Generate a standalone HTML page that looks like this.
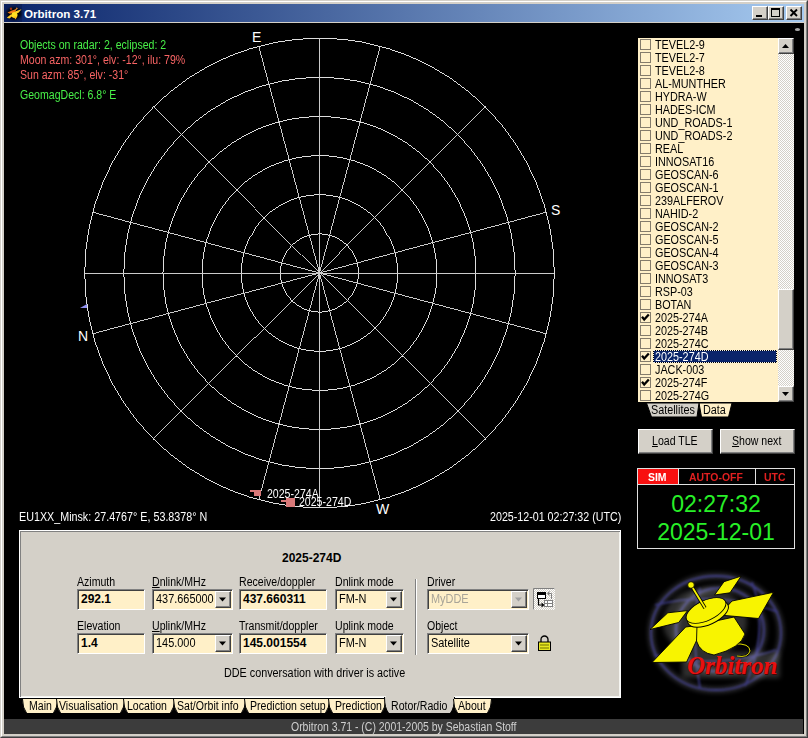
<!DOCTYPE html><html><head><meta charset="utf-8"><style>
*{margin:0;padding:0;box-sizing:border-box}
html,body{width:808px;height:738px;overflow:hidden;background:#d4d0c8;font-family:"Liberation Sans",sans-serif}
div,svg{position:absolute}
.u{font-size:12px;line-height:14px;white-space:nowrap;transform-origin:0 0;color:#000}
.b{font-size:12px;line-height:14px;font-weight:bold;white-space:nowrap;transform-origin:0 0;color:#000}
.btn{background:#d4d0c8;border:1px solid;border-color:#fff #404040 #404040 #fff;box-shadow:inset -1px -1px 0 #808080}
.edit{background:#fff0c8;border:1px solid;border-color:#808080 #fff #fff #808080;box-shadow:inset 1px 1px 0 #404040}
</style></head><body>
<div style="left:0;top:0;width:808px;height:738px;border:1px solid;border-color:#d4d0c8 #404040 #404040 #d4d0c8"></div>
<div style="left:1px;top:1px;width:806px;height:736px;border:1px solid;border-color:#fff #808080 #808080 #fff"></div>
<div style="left:4px;top:4px;width:800px;height:18px;background:linear-gradient(to right,#0a246a,#a6caf0)"></div>
<div class="b" style="left:24px;top:7px;color:#fff;font-size:11.6px;line-height:14px">Orbitron 3.71</div>
<svg style="left:0;top:0" width="30" height="30" viewBox="0 0 30 30">
<defs><filter id="ib" x="-50%" y="-50%" width="200%" height="200%"><feGaussianBlur stdDeviation="0.5"/></filter><filter id="ih" x="-50%" y="-50%" width="200%" height="200%"><feGaussianBlur stdDeviation="1.5"/></filter></defs>
<rect x="4" y="4" width="18" height="18" fill="#0a1f5c"/>
<ellipse cx="14" cy="13.5" rx="7.5" ry="6" fill="#000" filter="url(#ih)"/>
<g filter="url(#ib)">
<path d="M7.5 12.5 L12 10.5 L16.5 9 L15 12.5 L10 13.8 Z" fill="#f07818"/>
<circle cx="11" cy="8.8" r="1.2" fill="#a03010"/>
<path d="M15 11.5 L21.5 9.2 L18.5 12.8 L15.5 13.8 Z" fill="#ffd028"/>
<path d="M6.8 17.8 L11 14.2 L13 15.5 L9.5 18.5 Z" fill="#ffc820"/>
<circle cx="14.5" cy="15" r="3" fill="#ffe020"/>
<path d="M13.5 16.5 L17 16.5 L15.5 19.5 Z" fill="#ffb818"/>
<path d="M15 10.5 L16.8 7.3 L17.8 8.8 Z" fill="#f09030"/>
</g>
</svg>
<div class="btn" style="left:752px;top:6px;width:16px;height:14px"></div>
<div class="btn" style="left:768px;top:6px;width:16px;height:14px"></div>
<div class="btn" style="left:786px;top:6px;width:16px;height:14px"></div>
<div style="left:756px;top:15px;width:6px;height:2px;background:#000"></div>
<div style="left:771px;top:8px;width:9px;height:9px;border:1px solid #000;border-top-width:2px"></div>
<svg style="left:786px;top:6px" width="16" height="14"><path d="M4.5 3.5 L11 10 M11 3.5 L4.5 10" stroke="#000" stroke-width="1.9"/></svg>
<div style="left:4px;top:23px;width:800px;height:711px;background:#000"></div>
<svg style="left:0;top:0" width="808" height="738"><circle cx="319.5" cy="273.0" r="39.13" fill="none" stroke="#e0e0e0" stroke-width="0.99" shape-rendering="crispEdges"/><circle cx="319.5" cy="273.0" r="78.27" fill="none" stroke="#e0e0e0" stroke-width="0.99" shape-rendering="crispEdges"/><circle cx="319.5" cy="273.0" r="117.40" fill="none" stroke="#e0e0e0" stroke-width="0.99" shape-rendering="crispEdges"/><circle cx="319.5" cy="273.0" r="156.53" fill="none" stroke="#e0e0e0" stroke-width="0.99" shape-rendering="crispEdges"/><circle cx="319.5" cy="273.0" r="195.67" fill="none" stroke="#e0e0e0" stroke-width="0.99" shape-rendering="crispEdges"/><circle cx="319.5" cy="273.0" r="234.80" fill="none" stroke="#e0e0e0" stroke-width="0.99" shape-rendering="crispEdges"/><line x1="84.70" y1="273.00" x2="554.30" y2="273.00" stroke="#cccccc" stroke-width="0.99" shape-rendering="crispEdges"/><line x1="92.70" y1="212.23" x2="546.30" y2="333.77" stroke="#cccccc" stroke-width="0.99" shape-rendering="crispEdges"/><line x1="153.47" y1="106.97" x2="485.53" y2="439.03" stroke="#cccccc" stroke-width="0.99" shape-rendering="crispEdges"/><line x1="258.73" y1="46.20" x2="380.27" y2="499.80" stroke="#cccccc" stroke-width="0.99" shape-rendering="crispEdges"/><line x1="319.50" y1="38.20" x2="319.50" y2="507.80" stroke="#cccccc" stroke-width="0.99" shape-rendering="crispEdges"/><line x1="380.27" y1="46.20" x2="258.73" y2="499.80" stroke="#cccccc" stroke-width="0.99" shape-rendering="crispEdges"/><line x1="485.53" y1="106.97" x2="153.47" y2="439.03" stroke="#cccccc" stroke-width="0.99" shape-rendering="crispEdges"/><line x1="546.30" y1="212.23" x2="92.70" y2="333.77" stroke="#cccccc" stroke-width="0.99" shape-rendering="crispEdges"/></svg>
<div style="left:252px;top:29px;font-size:14px;line-height:16px;color:#fff">E</div>
<div style="left:551px;top:202px;font-size:14px;line-height:16px;color:#fff">S</div>
<div style="left:376px;top:501px;font-size:14px;line-height:16px;color:#fff">W</div>
<div style="left:78px;top:328px;font-size:14px;line-height:16px;color:#fff">N</div>
<svg style="left:78px;top:302px" width="12" height="8"><path d="M2 6 L9 2 L9 6 Z" fill="#9090f0"/></svg>
<svg style="left:794px;top:27px" width="8" height="6"><ellipse cx="3.5" cy="2.5" rx="2.6" ry="1.6" fill="#a8a8a8"/></svg>
<div class="u" style="left:20px;top:38px;color:#48f048;transform:scaleX(0.88);">Objects on radar: 2, eclipsed: 2</div>
<div class="u" style="left:20px;top:53px;color:#f86464;transform:scaleX(0.88);">Moon azm: 301°, elv: -12°, ilu: 79%</div>
<div class="u" style="left:20px;top:68px;color:#f86464;transform:scaleX(0.88);">Sun azm: 85°, elv: -31°</div>
<div class="u" style="left:20px;top:88px;color:#48f048;transform:scaleX(0.88);">GeomagDecl: 6.8° E</div>
<div style="left:250px;top:490px;width:5px;height:2px;background:#d87878"></div>
<div style="left:254px;top:490px;width:7px;height:6px;background:#d87878"></div>
<div style="left:281px;top:500px;width:5px;height:2px;background:#d87878"></div>
<div style="left:286px;top:498px;width:9px;height:9px;background:#d87878"></div>
<div class="u" style="left:267px;top:487px;color:#fff;transform:scaleX(0.88);">2025-274A</div>
<div class="u" style="left:299px;top:495px;color:#fff;transform:scaleX(0.88);">2025-274D</div>
<div class="u" style="left:19px;top:510px;color:#fff;transform:scaleX(0.895);">EU1XX_Minsk: 27.4767° E, 53.8378° N</div>
<div class="u" style="left:490px;top:510px;color:#fff;transform:scaleX(0.89);">2025-12-01 02:27:32 (UTC)</div>
<div style="left:19px;top:530px;width:602px;height:168px;background:#d4d0c8;border:1px solid #fff;box-shadow:inset 1px 1px 0 #808080,inset -1px -1px 0 #f4f4f0"></div>
<div class="b" style="left:282px;top:551px;">2025-274D</div>
<div class="u" style="left:77px;top:575px;transform:scaleX(0.88);">Azimuth</div>
<div class="u" style="left:152px;top:575px;transform:scaleX(0.88);"><u>D</u>nlink/MHz</div>
<div class="u" style="left:239px;top:575px;transform:scaleX(0.88);">Receive/doppler</div>
<div class="u" style="left:335px;top:575px;transform:scaleX(0.88);">Dnlink mode</div>
<div class="u" style="left:427px;top:575px;transform:scaleX(0.88);">Driver</div>
<div class="u" style="left:77px;top:619px;transform:scaleX(0.88);">Elevation</div>
<div class="u" style="left:152px;top:619px;transform:scaleX(0.88);"><u>U</u>plink/MHz</div>
<div class="u" style="left:239px;top:619px;transform:scaleX(0.88);">Transmit/doppler</div>
<div class="u" style="left:335px;top:619px;transform:scaleX(0.88);">Uplink mode</div>
<div class="u" style="left:427px;top:619px;transform:scaleX(0.88);">Object</div>
<div class="edit" style="left:77px;top:589px;width:68px;height:21px;"></div>
<div class="b" style="left:81px;top:592px;color:#000;">292.1</div>
<div class="edit" style="left:152px;top:589px;width:81px;height:21px;"></div>
<div class="u" style="left:156px;top:592px;color:#000;transform:scaleX(0.91);">437.665000</div>
<div class="btn" style="left:215px;top:591px;width:16px;height:17px;"></div>
<svg style="position:absolute;left:215px;top:591px" width="16" height="17"><path d="M4 6.5h7l-3.5 4z" fill="#000"/></svg>
<div class="edit" style="left:239px;top:589px;width:88px;height:21px;"></div>
<div class="b" style="left:243px;top:592px;color:#000;">437.660311</div>
<div class="edit" style="left:335px;top:589px;width:69px;height:21px;"></div>
<div class="u" style="left:339px;top:592px;color:#000;transform:scaleX(0.91);">FM-N</div>
<div class="btn" style="left:386px;top:591px;width:16px;height:17px;"></div>
<svg style="position:absolute;left:386px;top:591px" width="16" height="17"><path d="M4 6.5h7l-3.5 4z" fill="#000"/></svg>
<div class="edit" style="left:427px;top:589px;width:102px;height:21px;"></div>
<div class="u" style="left:431px;top:592px;color:#a8a498;transform:scaleX(0.91);">MyDDE</div>
<div class="btn" style="left:511px;top:591px;width:16px;height:17px;"></div>
<svg style="position:absolute;left:511px;top:591px" width="16" height="17"><path d="M4 6.5h7l-3.5 4z" fill="#a0a0a0"/></svg>
<div class="edit" style="left:77px;top:633px;width:68px;height:21px;"></div>
<div class="b" style="left:81px;top:636px;color:#000;">1.4</div>
<div class="edit" style="left:152px;top:633px;width:81px;height:21px;"></div>
<div class="u" style="left:156px;top:636px;color:#000;transform:scaleX(0.91);">145.000</div>
<div class="btn" style="left:215px;top:635px;width:16px;height:17px;"></div>
<svg style="position:absolute;left:215px;top:635px" width="16" height="17"><path d="M4 6.5h7l-3.5 4z" fill="#000"/></svg>
<div class="edit" style="left:239px;top:633px;width:88px;height:21px;"></div>
<div class="b" style="left:243px;top:636px;color:#000;">145.001554</div>
<div class="edit" style="left:335px;top:633px;width:69px;height:21px;"></div>
<div class="u" style="left:339px;top:636px;color:#000;transform:scaleX(0.91);">FM-N</div>
<div class="btn" style="left:386px;top:635px;width:16px;height:17px;"></div>
<svg style="position:absolute;left:386px;top:635px" width="16" height="17"><path d="M4 6.5h7l-3.5 4z" fill="#000"/></svg>
<div class="edit" style="left:427px;top:633px;width:102px;height:21px;"></div>
<div class="u" style="left:431px;top:636px;color:#000;transform:scaleX(0.91);">Satellite</div>
<div class="btn" style="left:511px;top:635px;width:16px;height:17px;"></div>
<svg style="position:absolute;left:511px;top:635px" width="16" height="17"><path d="M4 6.5h7l-3.5 4z" fill="#000"/></svg>
<div style="left:415px;top:579px;width:2px;height:76px;border-left:1px solid #808080;border-right:1px solid #fff"></div>
<div class="u" style="left:224px;top:666px;transform:scaleX(0.9);">DDE conversation with driver is active</div>
<svg style="left:533px;top:588px" width="22" height="22" viewBox="0 0 22 22">
<defs><pattern id="dith" width="2" height="2" patternUnits="userSpaceOnUse"><rect width="2" height="2" fill="#fff"/><rect width="1" height="1" fill="#d4d0c8"/><rect x="1" y="1" width="1" height="1" fill="#d4d0c8"/></pattern></defs>
<rect width="22" height="22" fill="url(#dith)"/>
<path d="M0.5 21.5V0.5H21.5" stroke="#808080" fill="none"/>
<rect x="4.5" y="4.5" width="8" height="6" fill="#fff" stroke="#000"/><rect x="4" y="4" width="9" height="3" fill="#000"/>
<path d="M5.5 11v6h3" stroke="#000" stroke-width="1.2" fill="none"/><path d="M8.5 14.5l3 2.5l-3 2.5z" fill="#000"/>
<rect x="11.5" y="12.5" width="8" height="6" fill="#fff" stroke="#808080"/><path d="M11.5 15.5h8M14.5 12.5v6" stroke="#808080"/>
<path d="M16.5 3.5l-2 2l2 2" stroke="#808080" fill="none"/><path d="M15 5.5h3.5v5.5" stroke="#808080" fill="none"/>
</svg>
<svg style="left:537px;top:635px" width="15" height="17" viewBox="0 0 15 17">
<path d="M4 7V4.5a3.5 3.5 0 0 1 7 0V7" stroke="#000" stroke-width="1.3" fill="none"/>
<rect x="1.5" y="7" width="12" height="8.5" fill="#e8e820" stroke="#000"/>
<path d="M3 10h9M3 13h9" stroke="#707000"/>
</svg>
<svg style="left:0;top:697px;overflow:visible" width="808" height="18"><rect x="19" y="1" width="602" height="1" fill="#000"/><path d="M22.5 2 Q22.5 11 26.5 16 L53.5 16 Q57.5 11 57.5 2 Z" fill="#fff0c8"/><path d="M22.5 2 Q22.5 11 26.5 16 M53.5 16 Q57.5 11 57.5 2" fill="none" stroke="#000" stroke-width="1"/><path d="M56.5 2 Q56.5 11 60.5 16 L120.5 16 Q124.5 11 124.5 2 Z" fill="#fff0c8"/><path d="M56.5 2 Q56.5 11 60.5 16 M120.5 16 Q124.5 11 124.5 2" fill="none" stroke="#000" stroke-width="1"/><path d="M123.5 2 Q123.5 11 127.5 16 L170.5 16 Q174.5 11 174.5 2 Z" fill="#fff0c8"/><path d="M123.5 2 Q123.5 11 127.5 16 M170.5 16 Q174.5 11 174.5 2" fill="none" stroke="#000" stroke-width="1"/><path d="M173.5 2 Q173.5 11 177.5 16 L241.5 16 Q245.5 11 245.5 2 Z" fill="#fff0c8"/><path d="M173.5 2 Q173.5 11 177.5 16 M241.5 16 Q245.5 11 245.5 2" fill="none" stroke="#000" stroke-width="1"/><path d="M244.5 2 Q244.5 11 248.5 16 L325.5 16 Q329.5 11 329.5 2 Z" fill="#fff0c8"/><path d="M244.5 2 Q244.5 11 248.5 16 M325.5 16 Q329.5 11 329.5 2" fill="none" stroke="#000" stroke-width="1"/><path d="M328.5 2 Q328.5 11 332.5 16 L381.5 16 Q385.5 11 385.5 2 Z" fill="#fff0c8"/><path d="M328.5 2 Q328.5 11 332.5 16 M381.5 16 Q385.5 11 385.5 2" fill="none" stroke="#000" stroke-width="1"/><path d="M384.5 0 Q384.5 11 388.5 16 L450.5 16 Q454.5 11 454.5 0 Z" fill="#d4d0c8"/><path d="M384.5 0 Q384.5 11 388.5 16 M450.5 16 Q454.5 11 454.5 0" fill="none" stroke="#000" stroke-width="1"/><path d="M453.5 2 Q453.5 11 457.5 16 L487.5 16 Q491.5 11 491.5 2 Z" fill="#fff0c8"/><path d="M453.5 2 Q453.5 11 457.5 16 M487.5 16 Q491.5 11 491.5 2" fill="none" stroke="#000" stroke-width="1"/><rect x="386" y="-1" width="68" height="3" fill="#d4d0c8"/></svg>
<div class="u" style="left:29px;top:699px;transform:scaleX(0.88);">Main</div>
<div class="u" style="left:59px;top:699px;transform:scaleX(0.88);">Visualisation</div>
<div class="u" style="left:127px;top:699px;transform:scaleX(0.88);">Location</div>
<div class="u" style="left:177px;top:699px;transform:scaleX(0.88);">Sat/Orbit info</div>
<div class="u" style="left:250px;top:699px;transform:scaleX(0.88);">Prediction setup</div>
<div class="u" style="left:335px;top:699px;transform:scaleX(0.88);">Prediction</div>
<div class="u" style="left:391px;top:699px;transform:scaleX(0.88);">Rotor/Radio</div>
<div class="u" style="left:458px;top:699px;transform:scaleX(0.88);">About</div>
<div style="left:4px;top:719px;width:799px;height:15px;background:#3c3c3c"></div>
<div class="u" style="left:291px;top:720px;color:#d0d0d0;transform:scaleX(0.872);">Orbitron 3.71 - (C) 2001-2005 by Sebastian Stoff</div>
<div style="left:638px;top:38px;width:156px;height:364px;background:#fff0c8"></div>
<div style="left:640px;top:39px;width:11px;height:11px;border:1px solid #847c6c"></div>
<div class="u" style="left:655px;top:38px;transform:scaleX(0.9);">TEVEL2-9</div>
<div style="left:640px;top:52px;width:11px;height:11px;border:1px solid #847c6c"></div>
<div class="u" style="left:655px;top:51px;transform:scaleX(0.9);">TEVEL2-7</div>
<div style="left:640px;top:65px;width:11px;height:11px;border:1px solid #847c6c"></div>
<div class="u" style="left:655px;top:64px;transform:scaleX(0.9);">TEVEL2-8</div>
<div style="left:640px;top:78px;width:11px;height:11px;border:1px solid #847c6c"></div>
<div class="u" style="left:655px;top:77px;transform:scaleX(0.9);">AL-MUNTHER</div>
<div style="left:640px;top:91px;width:11px;height:11px;border:1px solid #847c6c"></div>
<div class="u" style="left:655px;top:90px;transform:scaleX(0.9);">HYDRA-W</div>
<div style="left:640px;top:104px;width:11px;height:11px;border:1px solid #847c6c"></div>
<div class="u" style="left:655px;top:103px;transform:scaleX(0.9);">HADES-ICM</div>
<div style="left:640px;top:117px;width:11px;height:11px;border:1px solid #847c6c"></div>
<div class="u" style="left:655px;top:116px;transform:scaleX(0.9);">UND_ROADS-1</div>
<div style="left:640px;top:130px;width:11px;height:11px;border:1px solid #847c6c"></div>
<div class="u" style="left:655px;top:129px;transform:scaleX(0.9);">UND_ROADS-2</div>
<div style="left:640px;top:143px;width:11px;height:11px;border:1px solid #847c6c"></div>
<div class="u" style="left:655px;top:142px;transform:scaleX(0.9);">REAL</div>
<div style="left:640px;top:156px;width:11px;height:11px;border:1px solid #847c6c"></div>
<div class="u" style="left:655px;top:155px;transform:scaleX(0.9);">INNOSAT16</div>
<div style="left:640px;top:169px;width:11px;height:11px;border:1px solid #847c6c"></div>
<div class="u" style="left:655px;top:168px;transform:scaleX(0.9);">GEOSCAN-6</div>
<div style="left:640px;top:182px;width:11px;height:11px;border:1px solid #847c6c"></div>
<div class="u" style="left:655px;top:181px;transform:scaleX(0.9);">GEOSCAN-1</div>
<div style="left:640px;top:195px;width:11px;height:11px;border:1px solid #847c6c"></div>
<div class="u" style="left:655px;top:194px;transform:scaleX(0.9);">239ALFEROV</div>
<div style="left:640px;top:208px;width:11px;height:11px;border:1px solid #847c6c"></div>
<div class="u" style="left:655px;top:207px;transform:scaleX(0.9);">NAHID-2</div>
<div style="left:640px;top:221px;width:11px;height:11px;border:1px solid #847c6c"></div>
<div class="u" style="left:655px;top:220px;transform:scaleX(0.9);">GEOSCAN-2</div>
<div style="left:640px;top:234px;width:11px;height:11px;border:1px solid #847c6c"></div>
<div class="u" style="left:655px;top:233px;transform:scaleX(0.9);">GEOSCAN-5</div>
<div style="left:640px;top:247px;width:11px;height:11px;border:1px solid #847c6c"></div>
<div class="u" style="left:655px;top:246px;transform:scaleX(0.9);">GEOSCAN-4</div>
<div style="left:640px;top:260px;width:11px;height:11px;border:1px solid #847c6c"></div>
<div class="u" style="left:655px;top:259px;transform:scaleX(0.9);">GEOSCAN-3</div>
<div style="left:640px;top:273px;width:11px;height:11px;border:1px solid #847c6c"></div>
<div class="u" style="left:655px;top:272px;transform:scaleX(0.9);">INNOSAT3</div>
<div style="left:640px;top:286px;width:11px;height:11px;border:1px solid #847c6c"></div>
<div class="u" style="left:655px;top:285px;transform:scaleX(0.9);">RSP-03</div>
<div style="left:640px;top:299px;width:11px;height:11px;border:1px solid #847c6c"></div>
<div class="u" style="left:655px;top:298px;transform:scaleX(0.9);">BOTAN</div>
<div style="left:640px;top:312px;width:11px;height:11px;border:1px solid #847c6c"></div>
<svg style="left:640px;top:312px" width="11" height="11"><path d="M2 4.8 L4.2 7.5 L8.8 2.5" stroke="#000" stroke-width="2.3" fill="none"/></svg>
<div class="u" style="left:655px;top:311px;transform:scaleX(0.9);">2025-274A</div>
<div style="left:640px;top:325px;width:11px;height:11px;border:1px solid #847c6c"></div>
<div class="u" style="left:655px;top:324px;transform:scaleX(0.9);">2025-274B</div>
<div style="left:640px;top:338px;width:11px;height:11px;border:1px solid #847c6c"></div>
<div class="u" style="left:655px;top:337px;transform:scaleX(0.9);">2025-274C</div>
<div style="left:640px;top:351px;width:11px;height:11px;border:1px solid #847c6c"></div>
<svg style="left:640px;top:351px" width="11" height="11"><path d="M2 4.8 L4.2 7.5 L8.8 2.5" stroke="#000" stroke-width="2.3" fill="none"/></svg>
<div style="left:653px;top:350px;width:124px;height:13px;background:#000"></div>
<div style="left:653px;top:350px;width:124px;height:13px;background:#0a246a;background-clip:padding-box;border:1px dotted #f0f0f0"></div>
<div class="u" style="left:655px;top:350px;color:#fff;transform:scaleX(0.9);">2025-274D</div>
<div style="left:640px;top:364px;width:11px;height:11px;border:1px solid #847c6c"></div>
<div class="u" style="left:655px;top:363px;transform:scaleX(0.9);">JACK-003</div>
<div style="left:640px;top:377px;width:11px;height:11px;border:1px solid #847c6c"></div>
<svg style="left:640px;top:377px" width="11" height="11"><path d="M2 4.8 L4.2 7.5 L8.8 2.5" stroke="#000" stroke-width="2.3" fill="none"/></svg>
<div class="u" style="left:655px;top:376px;transform:scaleX(0.9);">2025-274F</div>
<div style="left:640px;top:390px;width:11px;height:11px;border:1px solid #847c6c"></div>
<div class="u" style="left:655px;top:389px;transform:scaleX(0.9);">2025-274G</div>
<svg style="left:778px;top:38px" width="16" height="364"><defs><pattern id="sb" width="2" height="2" patternUnits="userSpaceOnUse"><rect width="2" height="2" fill="#fff"/><rect width="1" height="1" fill="#d4d0c8"/><rect x="1" y="1" width="1" height="1" fill="#d4d0c8"/></pattern></defs><rect width="16" height="364" fill="url(#sb)"/></svg>
<div class="btn" style="left:778px;top:38px;width:16px;height:16px"></div>
<svg style="left:778px;top:38px" width="16" height="16"><path d="M4 10h7l-3.5-4z" fill="#000"/></svg>
<div class="btn" style="left:778px;top:289px;width:16px;height:61px"></div>
<div class="btn" style="left:778px;top:386px;width:16px;height:16px"></div>
<svg style="left:778px;top:386px" width="16" height="16"><path d="M4 6h7l-3.5 4z" fill="#000"/></svg>
<svg style="left:640px;top:402px" width="100" height="17"><path d="M92 1 L88.5 15 L61.5 15 L59 1 Z" fill="#fff0c8" stroke="#000"/><path d="M6.5 1 L11.5 15 L57 15 L59 1 Z" fill="#d4d0c8" stroke="#000"/></svg>
<div class="u" style="left:651px;top:403px;transform:scaleX(0.9);">Satellites</div>
<div class="u" style="left:703px;top:403px;transform:scaleX(0.9);">Data</div>
<div class="btn" style="left:638px;top:429px;width:75px;height:25px"></div>
<div class="btn" style="left:720px;top:429px;width:75px;height:25px"></div>
<div class="u" style="left:652px;top:434px;transform:scaleX(0.88);"><u>L</u>oad TLE</div>
<div class="u" style="left:732px;top:434px;transform:scaleX(0.88);"><u>S</u>how next</div>
<div style="left:637px;top:468px;width:158px;height:81px;border:1px solid #e0e0e0"></div>
<div style="left:638px;top:484px;width:156px;height:1px;background:#e0e0e0"></div>
<div style="left:638px;top:469px;width:40px;height:15px;background:#f81010"></div><div style="left:678px;top:469px;width:1px;height:15px;background:#e8e8e8"></div>
<div style="left:755px;top:469px;width:1px;height:15px;background:#e0e0e0"></div>
<div class="b" style="left:648px;top:470px;color:#fff;font-size:11px;transform:scaleX(0.95);">SIM</div>
<div class="b" style="left:689px;top:470px;color:#e02020;font-size:11px;transform:scaleX(0.95);">AUTO-OFF</div>
<div class="b" style="left:764px;top:470px;color:#e02020;font-size:11px;transform:scaleX(0.95);">UTC</div>
<div style="left:637px;top:491px;width:158px;text-align:center;font-size:23px;line-height:26px;color:#28f028">02:27:32</div>
<div style="left:637px;top:519px;width:158px;text-align:center;font-size:23px;line-height:26px;color:#28f028">2025-12-01</div>
<svg style="left:630px;top:555px" width="170" height="145" viewBox="630 555 170 145">
<defs>
<filter id="gl" x="-30%" y="-30%" width="160%" height="160%"><feGaussianBlur stdDeviation="2.5"/></filter>
<filter id="gl2" x="-30%" y="-30%" width="160%" height="160%"><feGaussianBlur stdDeviation="0.9"/></filter>
</defs>
<g filter="url(#gl)" opacity="0.3" stroke="#b8b8c8" fill="none" stroke-width="5">
<ellipse cx="716" cy="633" rx="65" ry="57"/><ellipse cx="720" cy="630" rx="44" ry="42"/>
</g>
<g filter="url(#gl2)" stroke="#4c48c0" fill="none" stroke-width="1.8" opacity="0.6">
<ellipse cx="716" cy="633" rx="65" ry="57"/><ellipse cx="720" cy="630" rx="44" ry="42"/>
<path d="M700 588 Q690 630 700 688M752 582 Q770 630 745 686M655 605 Q716 590 778 612M654 655 Q716 670 776 650"/>
</g>
<g filter="url(#gl)" opacity="0.22" fill="#d0d0d0">
<ellipse cx="705" cy="622" rx="42" ry="34"/>
<rect x="682" y="652" width="98" height="26"/>
</g>
<g fill="#f8f400" stroke="#000" stroke-width="0.9" stroke-linejoin="round">
<path d="M714.5 595 L724 581.7 L741.2 576.1 L730 592.8 Z"/>
<path d="M719.5 615 L732 601 L773.5 592.3 L758.5 618.5 Z"/>
<path d="M650 629.5 L667.8 612.8 L687.6 610.6 L678.7 622.5 Z"/>
<path d="M652 662.5 L685.7 627 L704 624.5 L686.6 662 Z"/>
<path d="M734 644 Q750 643 750 651 Q748 658 737 656" fill="none" stroke="#000" stroke-width="2.2"/>
<path d="M734 644 Q750 643 750 651 Q748 658 737 656" fill="none" stroke="#f8f400" stroke-width="0.9"/>
<path d="M697 625 L734 617 L745 634 Q741 648 714 655 Q700 653 696.5 641 Z"/>
<ellipse cx="708" cy="614" rx="22" ry="10.5" transform="rotate(-25 708 614)"/>
<ellipse cx="706" cy="610.5" rx="21.5" ry="10" transform="rotate(-25 706 610.5)"/>
</g>
<path d="M691 585 L705 608" stroke="#000" stroke-width="3.4"/>
<path d="M691 585 L705 608" stroke="#f8f400" stroke-width="1.8"/>
<circle cx="691" cy="585" r="3.3" fill="#f8f400" stroke="#000" stroke-width="0.8"/>
<text x="687" y="674" font-family="Liberation Serif" font-style="italic" font-weight="bold" font-size="25" fill="#500000" opacity="0.9" transform="translate(1 1)">Orbitron</text>
<text x="687" y="674" font-family="Liberation Serif" font-style="italic" font-weight="bold" font-size="25" fill="#e81010">Orbitron</text>
</svg>
</body></html>
